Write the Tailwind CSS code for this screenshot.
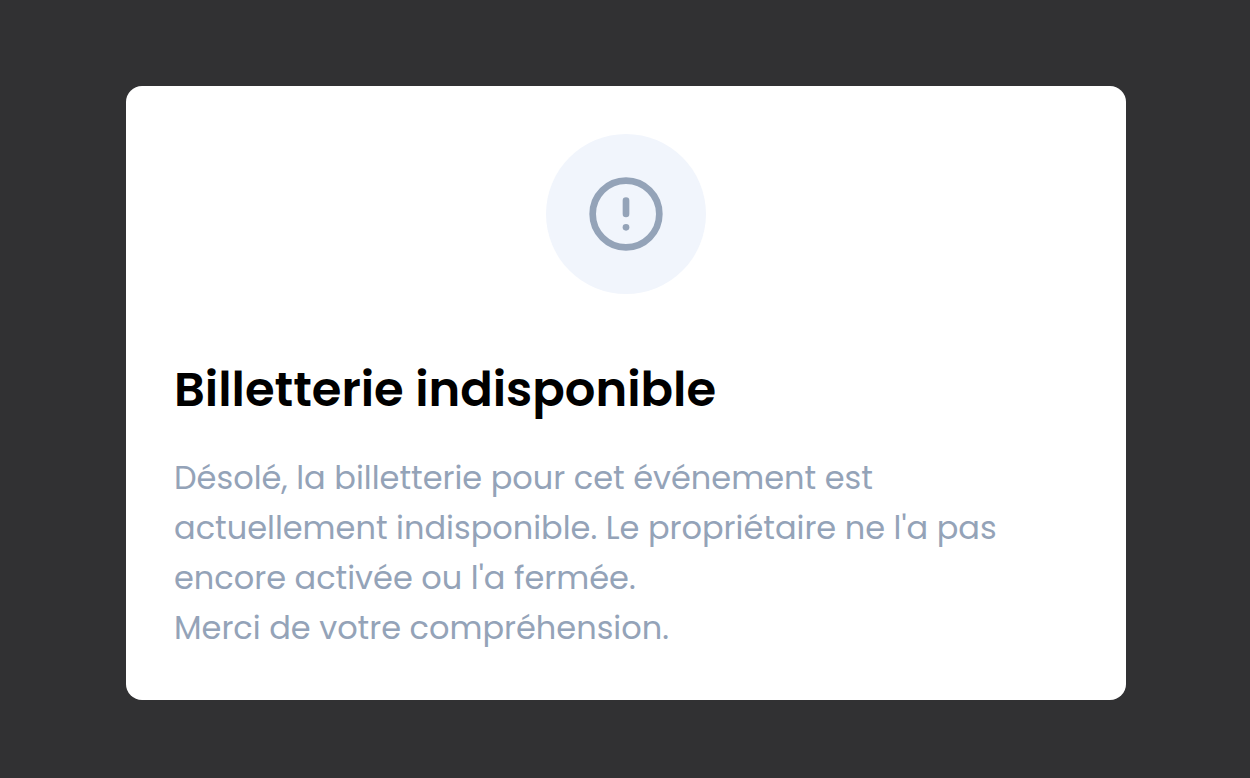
<!DOCTYPE html>
<html lang="fr">
<head>
  <meta charset="UTF-8" />
  <meta name="viewport" content="width=device-width, initial-scale=1.0" />
  <title>Billetterie indisponible</title>
  <script src="https://cdn.jsdelivr.net/npm/@tailwindcss/browser@4"></script>
</head>
<body class="bg-[#313133] font-[Poppins,Inter,sans-serif]">
  <!-- Overlay -->
  <div class="min-h-screen flex items-start justify-center pl-[34px] pr-8 pt-[86px] pb-[76px]">
    <!-- Dialog -->
    <main role="dialog" aria-labelledby="dialog-title" class="w-full max-w-[1000px] bg-white rounded-2xl px-12 pt-12 pb-[47px]">
      <div class="w-40 h-40 mx-auto rounded-full bg-[#f1f5fc] text-[#94a3b8] flex items-center justify-center">
        <svg class="w-20 h-20" viewBox="0 0 24 24" fill="none" stroke="currentColor" stroke-width="2" stroke-linecap="round" stroke-linejoin="round" aria-hidden="true">
          <circle cx="12" cy="12" r="10" />
          <path d="M12 8v4" />
          <path d="M12 16h.01" />
        </svg>
      </div>
      <h1 id="dialog-title" class="mt-[60px] text-[48px] leading-[72px] font-semibold text-black">Billetterie indisponible</h1>
      <p class="mt-[27px] text-[32px] leading-[50px] text-[#94a3b8]">
        Désolé, la billetterie pour cet événement est<br />
        actuellement indisponible. Le propriétaire ne l'a pas<br />
        encore activée ou l'a fermée.<br />
        Merci de votre compréhension.
      </p>
    </main>
  </div>
</body>
</html>
